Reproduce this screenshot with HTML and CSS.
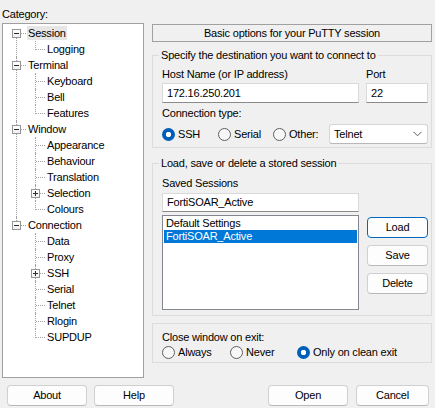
FILE: index.html
```html
<!DOCTYPE html>
<html>
<head>
<meta charset="utf-8">
<title>PuTTY Configuration</title>
<link rel="stylesheet" href="styles.css">
</head>
<body>
<div class="main">
  <div class="leftcol">
    <div class="cat-label">Category:</div>
    <div class="tree">
      <ul class="lvl0">
        <li>
          <div class="row"><span class="tog"></span><span class="lbl sel">Session</span></div>
          <ul class="lvl1">
            <li><div class="row"><span class="lbl">Logging</span></div></li>
          </ul>
        </li>
        <li>
          <div class="row"><span class="tog"></span><span class="lbl">Terminal</span></div>
          <ul class="lvl1">
            <li><div class="row"><span class="lbl">Keyboard</span></div></li>
            <li><div class="row"><span class="lbl">Bell</span></div></li>
            <li><div class="row"><span class="lbl">Features</span></div></li>
          </ul>
        </li>
        <li>
          <div class="row"><span class="tog"></span><span class="lbl">Window</span></div>
          <ul class="lvl1">
            <li><div class="row"><span class="lbl">Appearance</span></div></li>
            <li><div class="row"><span class="lbl">Behaviour</span></div></li>
            <li><div class="row"><span class="lbl">Translation</span></div></li>
            <li><div class="row"><span class="tog plus"></span><span class="lbl">Selection</span></div></li>
            <li><div class="row"><span class="lbl">Colours</span></div></li>
          </ul>
        </li>
        <li>
          <div class="row"><span class="tog"></span><span class="lbl">Connection</span></div>
          <ul class="lvl1">
            <li><div class="row"><span class="lbl">Data</span></div></li>
            <li><div class="row"><span class="lbl">Proxy</span></div></li>
            <li><div class="row"><span class="tog plus"></span><span class="lbl">SSH</span></div></li>
            <li><div class="row"><span class="lbl">Serial</span></div></li>
            <li><div class="row"><span class="lbl">Telnet</span></div></li>
            <li><div class="row"><span class="lbl">Rlogin</span></div></li>
            <li><div class="row"><span class="lbl">SUPDUP</span></div></li>
          </ul>
        </li>
      </ul>
    </div>
  </div>

  <div class="rightcol">
    <div class="banner">Basic options for your PuTTY session</div>

    <fieldset class="grp g1">
      <legend>Specify the destination you want to connect to</legend>
      <div class="pair">
        <div class="cap">Host Name (or IP address)</div>
        <div class="cap">Port</div>
        <div class="edit">172.16.250.201</div>
        <div class="edit">22</div>
      </div>
      <div class="cap ctype-label">Connection type:</div>
      <div class="ctype">
        <div class="radio"><span class="rb on"></span><span>SSH</span></div>
        <div class="radio"><span class="rb"></span><span>Serial</span></div>
        <div class="radio"><span class="rb"></span><span>Other:</span></div>
        <div class="combo"><span>Telnet</span>
          <svg class="chev" width="9" height="6" viewBox="0 0 9 6"><path d="M0.5 0.8 L4.5 4.8 L8.5 0.8" fill="none" stroke="#606060" stroke-width="1"/></svg>
        </div>
      </div>
    </fieldset>

    <fieldset class="grp g2">
      <legend>Load, save or delete a stored session</legend>
      <div class="pair sess">
        <div class="cap">Saved Sessions</div>
        <div></div>
        <div class="edit">FortiSOAR_Active</div>
        <div></div>
        <div class="listbox">
          <div class="item">Default Settings</div>
          <div class="item sel">FortiSOAR_Active</div>
        </div>
        <div class="side">
          <div class="btn def">Load</div>
          <div class="btn">Save</div>
          <div class="btn">Delete</div>
        </div>
      </div>
    </fieldset>

    <div class="grp g3">
      <div class="cap close-label">Close window on exit:</div>
      <div class="exitopts">
        <div class="radio"><span class="rb"></span><span>Always</span></div>
        <div class="radio"><span class="rb"></span><span>Never</span></div>
        <div class="radio"><span class="rb on"></span><span>Only on clean exit</span></div>
      </div>
    </div>
  </div>
</div>

<div class="bar">
  <div class="btn wide">About</div>
  <div class="btn wide">Help</div>
  <div class="btn wide push">Open</div>
  <div class="btn cancel">Cancel</div>
</div>
</body>
</html>
```

FILE: styles.css
```css
* { box-sizing: border-box; }
html, body { margin: 0; padding: 0; }
body {
  width: 435px;
  height: 408px;
  overflow: hidden;
  background: #f0f0f0;
  color: #000;
  font-family: "Liberation Sans", Arial, sans-serif;
  font-size: 11px;
  line-height: 16px;
  letter-spacing: -0.2px;
}

.main {
  display: grid;
  grid-template-columns: 142px 280px;
  column-gap: 8px;
  padding: 6px 0 0 2px;
}

/* ---------- tree ---------- */
.leftcol { display: flex; flex-direction: column; }
.cat-label { height: 16px; margin-bottom: 1px; }
.tree {
  height: 355px;
  background: #fff;
  border: 1px solid #a0a0a0;
  padding-top: 1px;
}
.tree ul { list-style: none; margin: 0; padding: 0; }
.tree li { position: relative; }

.lvl0 > li::before,
.lvl1 > li::before {
  content: "";
  position: absolute;
  top: 0;
  bottom: 0;
  left: 13px;
  border-left: 1px dotted #a0a0a0;
}
.lvl0 > li:first-child::before { top: 8px; }
.lvl0 > li:last-child::before { bottom: auto; height: 8px; }
.lvl1 > li::before { left: 32px; }
.lvl1 > li:last-child::before { bottom: auto; height: 9px; }

.row {
  position: relative;
  height: 16px;
  display: flex;
  align-items: center;
  padding-left: 24px;
}
.lvl1 .row { padding-left: 43px; }
.row::after {
  content: "";
  position: absolute;
  top: 8px;
  left: 18px;
  width: 5px;
  border-top: 1px dotted #a0a0a0;
}
.lvl1 .row::after { left: 33px; width: 9px; }

.tog {
  position: absolute;
  z-index: 1;
  left: 9px;
  top: 4px;
  width: 9px;
  height: 9px;
  border: 1px solid #969696;
  background: linear-gradient(#ffffff, #f0f0f0);
}
.lvl1 .tog { left: 28px; }
.tog::before {
  content: "";
  position: absolute;
  left: 1px;
  top: 3px;
  width: 5px;
  height: 1px;
  background: #2b2b2b;
}
.tog.plus::after {
  content: "";
  position: absolute;
  left: 3px;
  top: 1px;
  width: 1px;
  height: 5px;
  background: #2b2b2b;
}
.lbl {
  position: relative;
  z-index: 2;
  height: 14px;
  line-height: 14px;
  padding: 0 1px;
}
.lbl.sel { background: #e6e6e6; }

/* ---------- right column ---------- */
.rightcol { display: flex; flex-direction: column; }
.banner {
  margin-top: 18px;
  height: 18px;
  border: 1px solid #a0a0a0;
  text-align: center;
  line-height: 16px;
}

.grp {
  margin: 0;
  min-width: 0;
  border: 1px solid #dcdcdc;
  padding: 4px 3px 3px 9px;
}
.grp legend {
  padding: 0 2px;
  margin-left: -3px;
  line-height: 14px;
}
.g1 { margin-top: 6px; }
.g2 { margin-top: 8px; padding: 5px 3px 5px 9px; }
.g3 { margin-top: 7px; padding: 6px 3px 2px 9px; }

.pair {
  display: grid;
  grid-template-columns: 197px 62px;
  column-gap: 7px;
}
.cap { line-height: 16px; }

.edit {
  margin-top: 1px;
  height: 20px;
  background: #fff;
  border: 1px solid #d9d9d9;
  border-bottom-color: #8b8b8b;
  padding-left: 4px;
  line-height: 18px;
  white-space: nowrap;
}

.ctype-label { margin-top: 2px; }
.ctype {
  margin-top: 3px;
  height: 20px;
  display: grid;
  grid-template-columns: 56px 55px 56px 99px;
  align-items: center;
}
.radio { display: flex; align-items: center; gap: 3px; white-space: nowrap; }
.rb {
  flex: none;
  width: 13px;
  height: 13px;
  border-radius: 50%;
  border: 1px solid #5f5f5f;
  background: #f7f7f7;
}
.rb.on {
  border: none;
  background: radial-gradient(circle at center, #fff 0 2.4px, #005fb8 3px);
}

.combo {
  height: 20px;
  background: #fff;
  border: 1px solid #d5d5d5;
  border-bottom-color: #b8b8b8;
  border-radius: 3px;
  display: flex;
  align-items: center;
  justify-content: space-between;
  padding: 0 5px 0 4px;
}
.chev { display: block; }

.sess .edit { margin-top: 2px; height: 19px; line-height: 17px; }
.listbox {
  margin-top: 3px;
  height: 95px;
  background: #fff;
  border: 1px solid #828790;
  padding: 1px;
}
.item {
  height: 13px;
  line-height: 13px;
  padding-left: 2px;
  white-space: nowrap;
}
.item.sel { background: #0078d7; color: #fff; }

.side {
  margin-top: 5px;
  padding-left: 1px;
  display: flex;
  flex-direction: column;
  gap: 7px;
}

.btn {
  height: 21px;
  background: #fdfdfd;
  border: 1px solid #d0d0d0;
  border-bottom-color: #b9b9b9;
  border-radius: 4px;
  text-align: center;
  line-height: 19px;
}
.btn.def { border-color: #0067c0; }

.close-label { line-height: 14px; }
.exitopts {
  height: 16px;
  display: grid;
  grid-template-columns: 68px 67px 1fr;
  align-items: center;
}

/* ---------- bottom bar ---------- */
.bar {
  display: flex;
  margin-top: 7px;
  padding-left: 7px;
}
.btn.wide { width: 80px; margin-right: 7px; }
.btn.push { margin-left: 87px; margin-right: 8px; }
.btn.cancel { width: 73px; }
```
